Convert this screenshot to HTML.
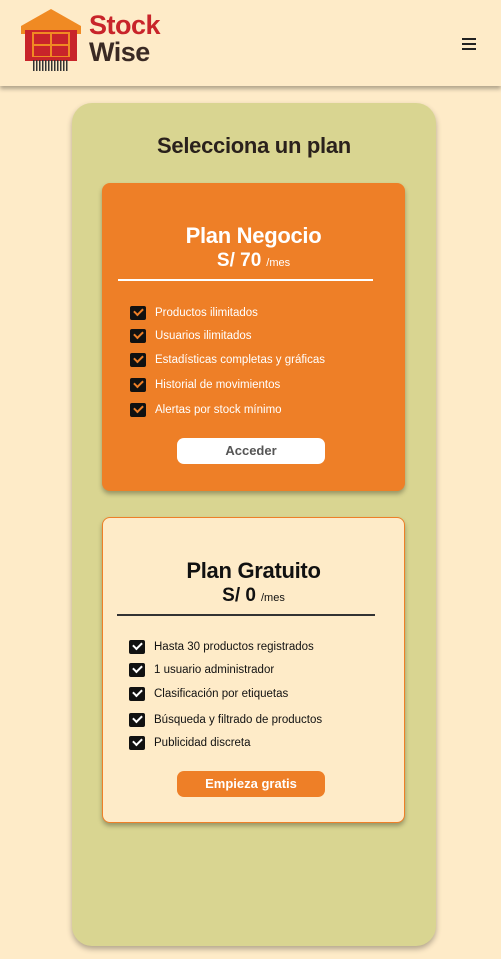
<!DOCTYPE html>
<html><head><meta charset="utf-8"><style>
*{margin:0;padding:0;box-sizing:border-box}
body{width:501px;height:959px;background:#feebc8;font-family:"Liberation Sans",sans-serif;position:relative;overflow:hidden}
.hdr{position:absolute;left:0;top:0;width:501px;height:86px;background:#feebc8;box-shadow:0 3px 4px rgba(0,0,0,.3)}
.logo1{position:absolute;left:89px;top:10px;font-size:27px;font-weight:bold;color:#c8242a;line-height:30px;letter-spacing:-0.5px}
.logo2{position:absolute;left:89px;top:37px;font-size:27px;font-weight:bold;color:#3a2a24;line-height:30px;letter-spacing:-0.5px}
.ham{position:absolute;left:462px;top:38px;width:14px}
.ham i{display:block;height:1.5px;background:#222;margin-bottom:3.5px}
.panel{position:absolute;left:72px;top:103px;width:364px;height:843px;background:#d9d591;border-radius:20px;box-shadow:0 3px 6px rgba(0,0,0,.3)}
h1{position:absolute;left:72px;width:364px;top:133px;text-align:center;font-size:22px;color:#2a211c;letter-spacing:-0.3px}
.card{position:absolute;left:102px;width:303px;border-radius:8px;box-shadow:0 3px 5px rgba(0,0,0,.3)}
.c1{top:183px;height:308px;background:#ee7f27;color:#fff}
.c2{top:517px;height:306px;background:#feebc8;border:1px solid #ee7f27;color:#111}
.t{position:absolute;width:100%;text-align:center;font-size:22px;font-weight:bold;letter-spacing:-0.3px}
.p{position:absolute;width:100%;text-align:center;font-size:19px;font-weight:bold}
.p small{font-size:11px;font-weight:normal;margin-left:5px}
.ln{position:absolute;left:16px;width:256px;height:1.5px}
.it{position:absolute;left:28px;font-size:11.5px;display:flex;align-items:center;margin-top:2px}
.cb{width:16px;height:14px;background:#111;border-radius:2px;margin-right:9px;position:relative}
.cb:after{content:"";position:absolute;left:4px;top:2px;width:7px;height:4px;border-left:2px solid;border-bottom:2px solid;transform:rotate(-45deg)}
.c1 .cb:after{border-color:#ee7f27}.c2 .cb:after{border-color:#fff}
.btn{position:absolute;left:75px;width:148px;height:26px;border-radius:7px;text-align:center;line-height:26px;font-size:13px;font-weight:600}
</style></head><body>
<div class="hdr">
<svg style="position:absolute;left:20px;top:8px" width="62" height="64" viewBox="0 0 62 64">
<path d="M1 18 L31 1 L61 18 L61 26 L1 26Z" fill="#f08a23"/>
<rect x="5" y="22" width="52" height="31" fill="#c8242a"/>
<rect x="12" y="24" width="38" height="25" fill="#f08a23"/>
<rect x="14" y="26" width="16" height="10" fill="#c8242a"/><rect x="32" y="26" width="16" height="10" fill="#c8242a"/>
<rect x="14" y="38" width="16" height="10" fill="#c8242a"/><rect x="32" y="38" width="16" height="10" fill="#c8242a"/>
<g fill="#333"><rect x="13" y="52" width="1.5" height="11"/><rect x="16" y="52" width="1.5" height="11"/><rect x="19" y="52" width="1.5" height="11"/><rect x="22" y="52" width="1.5" height="11"/><rect x="25" y="52" width="1.5" height="11"/><rect x="28" y="52" width="1.5" height="11"/><rect x="31" y="52" width="1.5" height="11"/><rect x="34" y="52" width="1.5" height="11"/><rect x="37" y="52" width="1.5" height="11"/><rect x="40" y="52" width="1.5" height="11"/><rect x="43" y="52" width="1.5" height="11"/><rect x="46" y="52" width="1.5" height="11"/></g>
</svg>
<div class="logo1">Stock</div><div class="logo2">Wise</div>
<div class="ham"><i></i><i></i><i></i></div>
</div>
<div class="panel"></div>
<h1>Selecciona un plan</h1>
<div class="card c1">
<div class="t" style="top:40px">Plan Negocio</div>
<div class="p" style="top:67px">S/ 70<small>/mes</small></div>
<div class="ln" style="top:96px;background:#fff;width:255px"></div>
<div class="it" style="top:121px"><span class="cb"></span>Productos ilimitados</div>
<div class="it" style="top:144px"><span class="cb"></span>Usuarios ilimitados</div>
<div class="it" style="top:168px"><span class="cb"></span>Estadísticas completas y gráficas</div>
<div class="it" style="top:193px"><span class="cb"></span>Historial de movimientos</div>
<div class="it" style="top:218px"><span class="cb"></span>Alertas por stock mínimo</div>
<div class="btn" style="top:255px;background:#fff;color:#555">Acceder</div>
</div>
<div class="card c2">
<div class="t" style="top:40px">Plan Gratuito</div>
<div class="p" style="top:67px">S/ 0<small>/mes</small></div>
<div class="ln" style="top:96px;background:#333;left:14px;width:258px"></div>
<div class="it" style="top:120px;left:26px"><span class="cb"></span>Hasta 30 productos registrados</div>
<div class="it" style="top:143px;left:26px"><span class="cb"></span>1 usuario administrador</div>
<div class="it" style="top:167px;left:26px"><span class="cb"></span>Clasificación por etiquetas</div>
<div class="it" style="top:193px;left:26px"><span class="cb"></span>Búsqueda y filtrado de productos</div>
<div class="it" style="top:216px;left:26px"><span class="cb"></span>Publicidad discreta</div>
<div class="btn" style="top:253px;left:74px;background:#ee7f27;color:#fff">Empieza gratis</div>
</div>
</body></html>
